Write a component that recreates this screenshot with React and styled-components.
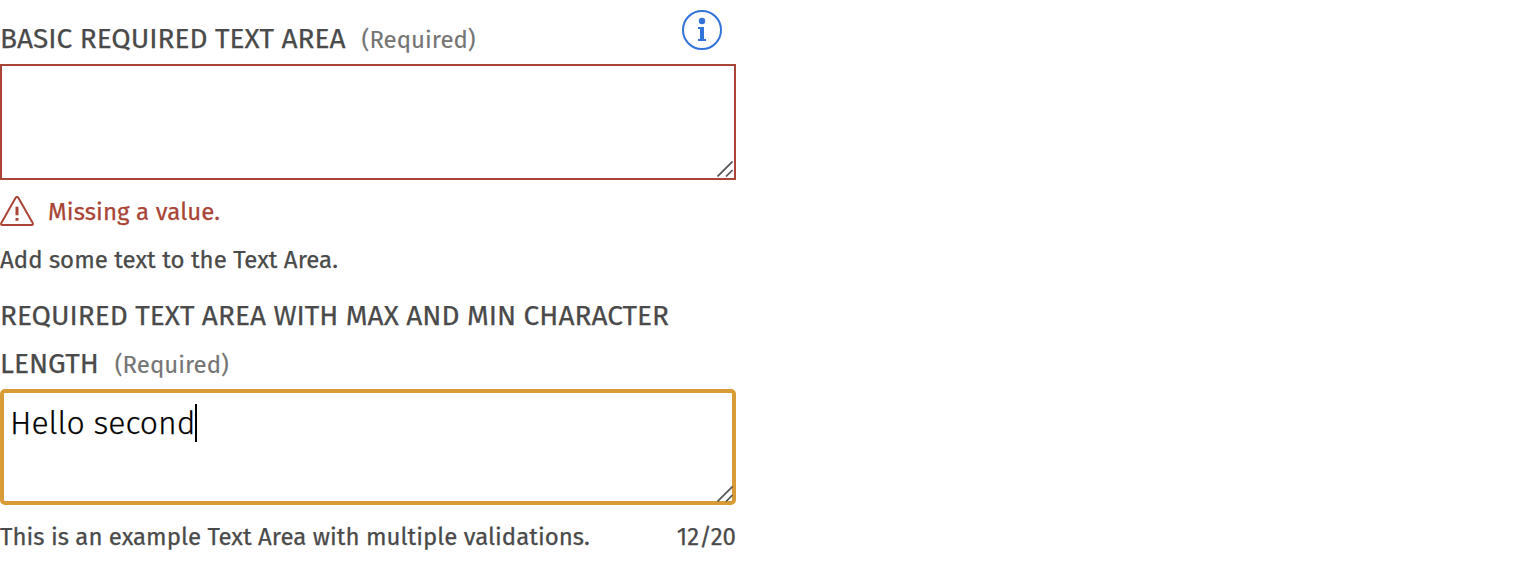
import React from "react";
import styled, { createGlobalStyle } from "styled-components";

const GlobalStyle = createGlobalStyle`
  body {
    margin: 0;
    background: #fff;
    color: #4a4a4a;
    font-family: "Fira Sans", "Noto Sans", sans-serif;
    -webkit-text-stroke: 0.25px currentColor;
  }
`;

const Form = styled.form`
  display: flex;
  flex-direction: column;
  width: 736px;
`;

const Field = styled.section`
  display: flex;
  flex-direction: column;
`;

const LabelRow = styled.div`
  display: flex;
  justify-content: space-between;
  box-sizing: border-box;
  height: ${(p) => p.$height}px;
  padding: ${(p) => p.$top}px 14px 0 0;
`;

const Label = styled.div`
  display: flex;
  flex-direction: column;
  font-size: 28px;
  font-weight: 400;
  line-height: 48px;
  white-space: nowrap;
`;

const LabelLine = styled.div`
  display: flex;
  align-items: baseline;
  height: 48px;
`;

const Text = styled.span`
  letter-spacing: 0.02px;
`;

const Required = styled.span`
  margin-left: 16px;
  color: #757575;
  font-size: 24px;
  font-weight: 400;
  letter-spacing: 0.02px;
  -webkit-text-stroke: 0.12px currentColor;
`;

const InfoIcon = styled.svg`
  width: 40px;
  height: 40px;
  margin-top: -5px;
`;

const Area = styled.div`
  position: relative;
  display: flex;
  align-items: flex-start;
  box-sizing: border-box;
  height: 116px;
  border: ${(p) => (p.$focused ? "4px solid #d99b35" : "2px solid #a94436")};
  border-radius: ${(p) => (p.$focused ? 5 : 0)}px;
  padding: ${(p) => (p.$focused ? "11px 0 0 6px" : "0")};
`;

const Value = styled.span`
  color: #000;
  font-size: 32px;
  font-weight: 300;
  line-height: 38px;
  white-space: nowrap;
  letter-spacing: -0.05px;
`;

const Caret = styled.i`
  width: 2px;
  height: 38px;
  background: #000;
`;

const Grip = styled.svg`
  position: absolute;
  right: ${(p) => p.$right}px;
  bottom: ${(p) => p.$bottom}px;
  width: 16px;
  height: 16px;
`;

const ErrorRow = styled.div`
  display: flex;
  align-items: center;
  gap: 14px;
  height: 62px;
  color: #a94436;
  font-size: 24px;
  line-height: 34px;
`;

const ErrorText = styled.span`
  padding-top: 2px;
  letter-spacing: 0.1px;
`;

const HelpRow = styled.div`
  display: flex;
  justify-content: space-between;
  font-size: 24px;
  font-weight: 400;
  line-height: 32px;
  white-space: nowrap;
  padding-top: ${(p) => p.$top || 0}px;
`;

function ResizeGrip({ right, bottom }) {
  return (
    <Grip $right={right} $bottom={bottom} viewBox="0 0 16 16" fill="none" stroke="#555" strokeWidth="1.7">
      <path d="M0.5 15.5 15.5 .5M9 15.5 15.5 9" />
    </Grip>
  );
}

export default function App() {
  return (
    <>
      <GlobalStyle />
      <Form>
        <Field>
          <LabelRow $height={64} $top={15}>
            <Label>
              <LabelLine>
                <Text>BASIC REQUIRED TEXT AREA</Text>
                <Required>(Required)</Required>
              </LabelLine>
            </Label>
            <InfoIcon viewBox="0 0 40 40" fill="#3272d9">
              <circle cx="20" cy="20" r="19" fill="none" stroke="#3272d9" strokeWidth="2" />
              <circle cx="20" cy="11" r="3.2" />
              <path d="M16 17h6v12h2v2h-8v-2h2V19h-2z" />
            </InfoIcon>
          </LabelRow>
          <Area>
            <ResizeGrip right={1} bottom={1} />
          </Area>
          <ErrorRow>
            <svg width="34" height="30" viewBox="0 0 34 30" fill="none" stroke="#a94436" strokeWidth="2" strokeLinejoin="round">
              <path d="M15.8 1.6q1.2-1.2 2.4 0L32.7 27q.7 2-1 2H2.3q-1.7 0-1-2z" />
              <path d="M17 10.7v8.6M17 22v2.7" strokeWidth="3" />
            </svg>
            <ErrorText>Missing a value.</ErrorText>
          </ErrorRow>
          <HelpRow $top={2}>
            <Text>Add some text to the Text Area.</Text>
          </HelpRow>
        </Field>
        <Field>
          <LabelRow $height={113} $top={16}>
            <Label>
              <LabelLine>
                <Text>REQUIRED TEXT AREA WITH MAX AND MIN CHARACTER</Text>
              </LabelLine>
              <LabelLine>
                <Text>LENGTH</Text>
                <Required>(Required)</Required>
              </LabelLine>
            </Label>
          </LabelRow>
          <Area $focused>
            <Value>Hello second</Value>
            <Caret />
            <ResizeGrip right={-1} bottom={-1} />
          </Area>
          <HelpRow $top={16}>
            <Text>This is an example Text Area with multiple validations.</Text>
            <Text>12/20</Text>
          </HelpRow>
        </Field>
      </Form>
    </>
  );
}
